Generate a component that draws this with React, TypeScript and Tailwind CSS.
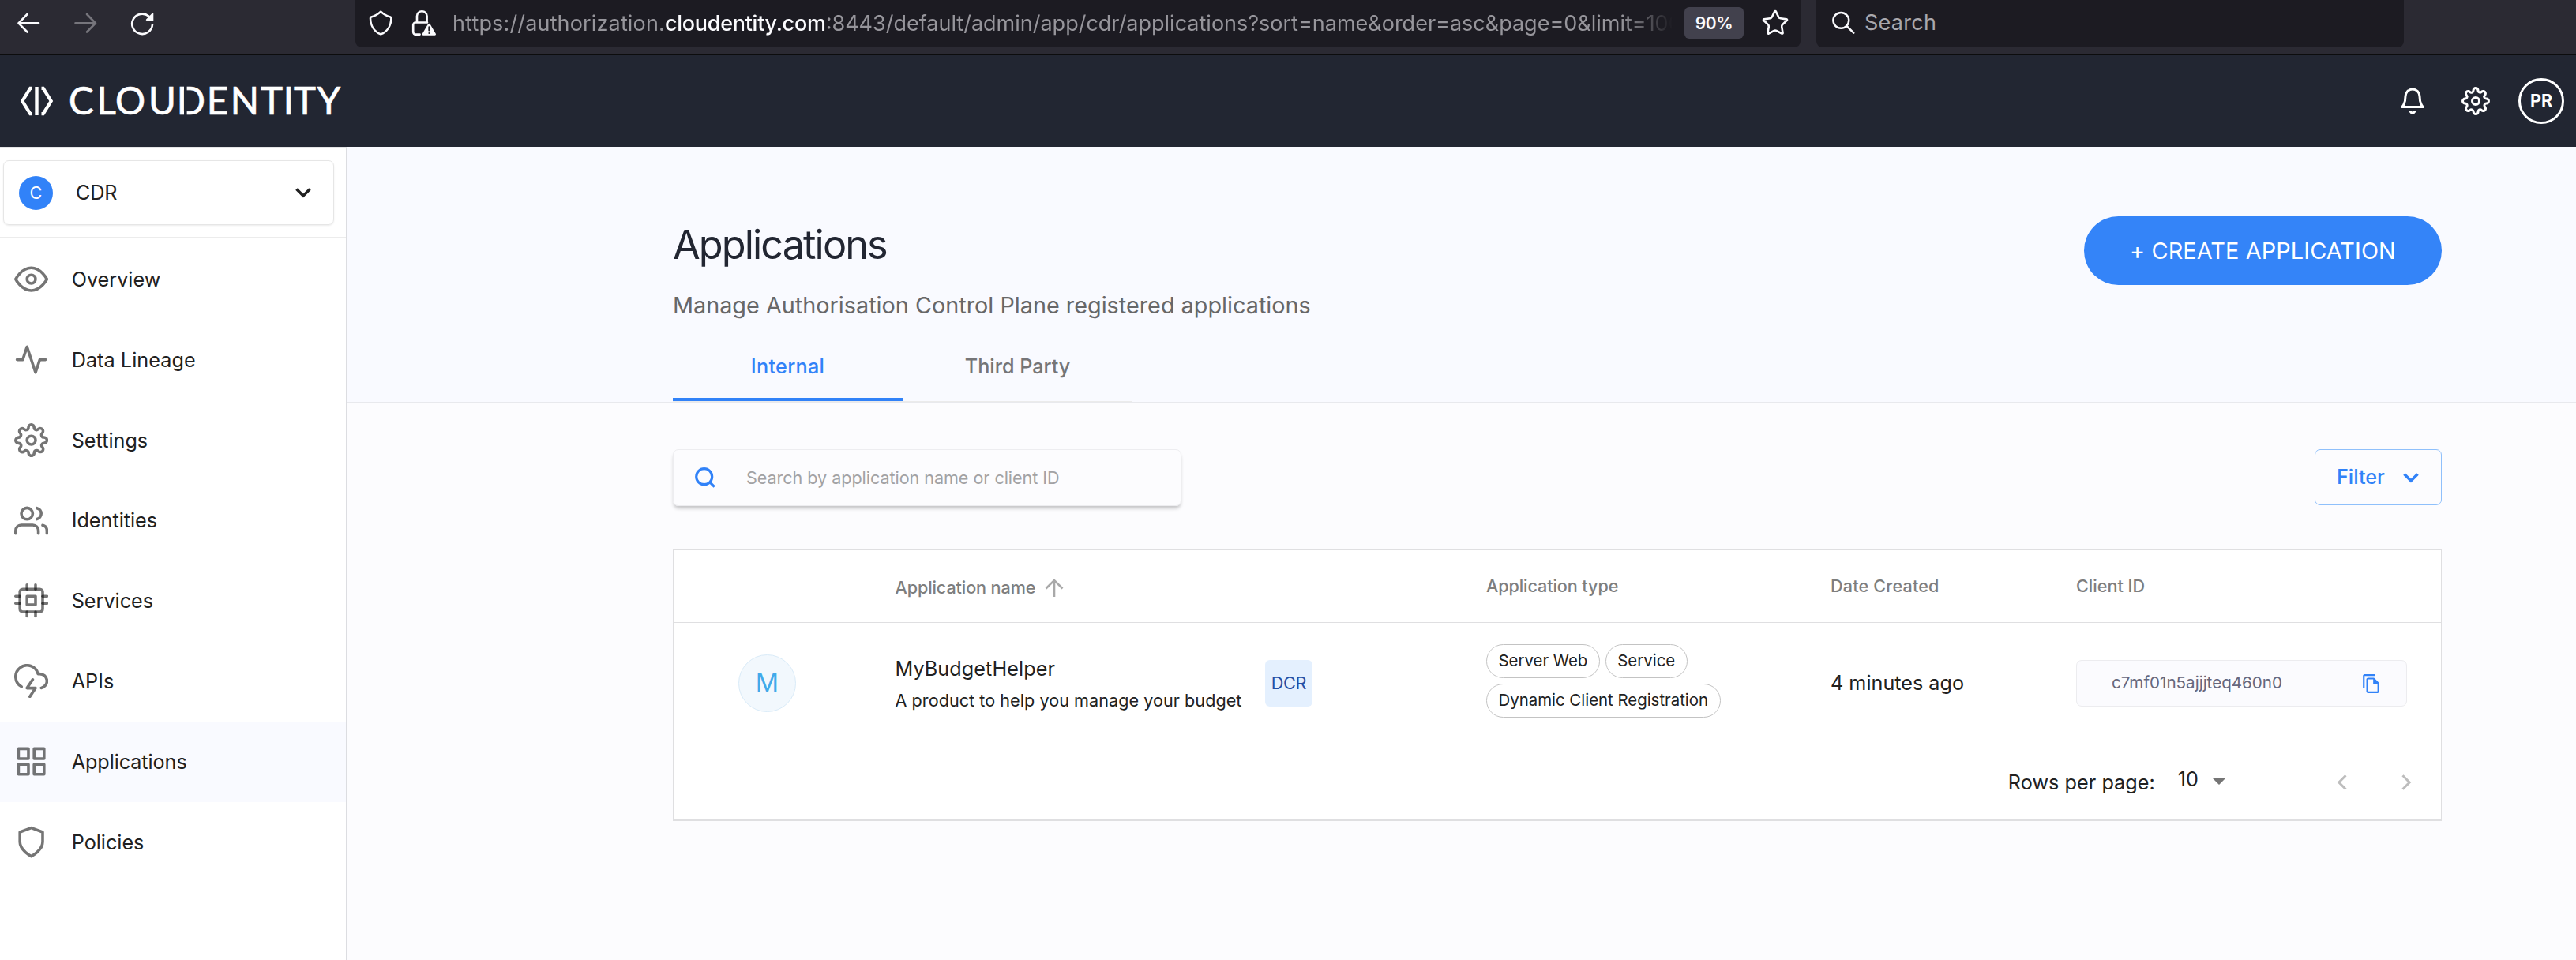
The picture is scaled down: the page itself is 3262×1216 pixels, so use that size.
import type { ReactNode } from 'react';
import {
  FiActivity,
  FiBell,
  FiCloudLightning,
  FiCpu,
  FiEye,
  FiGrid,
  FiSettings,
  FiShield,
  FiUsers,
} from 'react-icons/fi';
import type { IconType } from 'react-icons';
import { Star } from 'lucide-react';
import { MdOutlineFileCopy } from 'react-icons/md';

function BrowserBar() {
  return (
    <div className="flex h-[70px] w-full border-b-2 border-[#0c0c0d] bg-[#2b2a33]">
      <div className="flex h-[58px] w-[450px] items-center">
        <svg width="220" height="58" viewBox="0 0 220 58" fill="none" strokeWidth="2.6" strokeLinecap="round" strokeLinejoin="round">
          <path d="M49 29.3H23.5M34.5 18 23.5 29.3l11 11.2" stroke="#fbfbfe" />
          <path d="M95.5 29.3h25.5M110 18l11 11.3-11 11.2" stroke="#76757c" />
          <path d="M193 31.2a12.9 12.7 0 1 1-4.6-10.6" stroke="#fbfbfe" />
          <path d="M194.3 17.3v8.8h-8.6c-1 0-1.2-.9-.6-1.5l7.6-7.9c.6-.6 1.6-.3 1.6.6z" fill="#fbfbfe" />
        </svg>
      </div>
      <div className="flex h-[60px] w-[1830px] items-center rounded-b-lg bg-[#1c1b22] pb-[3px]">
        <svg className="ml-4 shrink-0" width="90" height="40" viewBox="466 8 90 40" fill="none" stroke="#fbfbfe" strokeWidth="2.6" strokeLinejoin="round" strokeLinecap="round">
          <path d="M482.2 13.6c3.5 3.4 7.6 5.7 12 6.8.8.3 1.2.8 1.2 1.6-.2 9.5-5 17.3-13.2 20.4-8.2-3.1-13-10.900-13.2-20.4 0-.8.4-1.3 1.2-1.6 4.4-1.1 8.5-3.4 12-6.8z" />
          <path d="M528 27.5v-8.2a6.2 6 0 0 1 12.6 0v8.2M541 27.5h-14.8a3 3 0 0 0-3 3V39.6a3 3 0 0 0 3 3h5.4" />
          <path d="M542 29.5c.6-1 2-1 2.6 0l7.2 12.3c.5.9-.1 2-1.2 2h-14.6c-1.1 0-1.7-1.1-1.2-2z" fill="#fbfbfe" stroke="none" />
          <path d="M543.3 33.3v4.2M543.3 40.9v.1" stroke="#1c1b22" strokeWidth="1.9" />
        </svg>
        <div className="ml-[17px] w-[1545px] overflow-hidden whitespace-nowrap pt-0.5 text-[27px] leading-[40px] text-[#96959b] [mask-image:linear-gradient(to_right,black_1480px,transparent_1545px)]">
          <span className="tracking-[0.0056em]">https://authorization.</span>
          <span className="font-medium tracking-[-0.0104em] text-[#fbfbfe]">cloudentity.com</span>
          <span>:8443/default/admin/app/cdr/applications?sort=name&amp;order=asc&amp;page=0&amp;limit=100</span>
        </div>
        <div className="ml-[15px] flex h-10 w-[75px] shrink-0 items-center justify-center rounded-md bg-[#42414d] pt-0.5 text-[21px] font-semibold tracking-[-0.01em] text-[#fbfbfe]">
          90%
        </div>
        <Star className="ml-[22px] shrink-0 text-[#fbfbfe]" size={36} strokeWidth={1.75} />
      </div>
      <div className="ml-5 flex h-[60px] w-[744px] items-center rounded-b-lg bg-[#1c1b22] pb-[3px]">
        <svg className="ml-5 shrink-0" width="30" height="30" viewBox="0 0 30 30" fill="none" stroke="#fbfbfe" strokeWidth="2.5" strokeLinecap="round">
          <circle cx="11.3" cy="11.8" r="9.9" />
          <path d="M18.5 19l8.8 8.6" />
        </svg>
        <span className="ml-[11px] pt-0.5 text-[27px] tracking-[0.01em] text-[#a9a8ad]">Search</span>
      </div>
    </div>
  );
}

function Logo() {
  return (
    <svg className="ml-6 shrink-0 overflow-visible" width="412" height="64" viewBox="24 97 412 64">
      <g fill="none" stroke="#fff" strokeWidth="4.4">
        <path d="M40.5 112.8h-2.2l-10 16.2 10 16.2h2.2" strokeWidth="4.2" />
        <path d="M52.5 112.8h2.2l10 16.2-10 16.2h-2.2" strokeWidth="4.2" />
        <path d="M46.5 111v36" />
      </g>
      <text
        className="font-[Lato,sans-serif]"
        x="87 122.5 146 188 223.8 261.8 291.8 330 358.7 372 401.5"
        y="146.3"
        fontSize="47.5"
        fill="#fff"
        stroke="#fff"
        strokeWidth="0.7"
      >
        CLOUDENTITY
      </text>
      <rect x="233" y="108" width="3.6" height="42" fill="#222632" />
    </svg>
  );
}

function Header() {
  return (
    <header className="flex h-[116px] w-full items-center bg-[#222632] pb-px text-white">
      <Logo />
      <div className="ml-auto flex items-center pr-[15px]">
        <FiBell size={36} />
        <FiSettings className="ml-11" size={36} />
        <div className="ml-9 flex size-[58px] items-center justify-center rounded-full border-[3px] border-white text-[21.6px] font-bold">
          PR
        </div>
      </div>
    </header>
  );
}

function Chevron({ className, width }: { className: string; width: number }) {
  return (
    <svg className={className} width={width} height={width * 0.7} viewBox="0 0 20 14" fill="none" stroke="currentColor" strokeWidth="3.6">
      <path d="M1.5 2.5 10 11l8.5-8.5" />
    </svg>
  );
}

const NAV: { label: string; icon: IconType; active?: boolean; spacing: string }[] = [
  { label: 'Overview', icon: FiEye, spacing: '' },
  { label: 'Data Lineage', icon: FiActivity, spacing: 'tracking-[0.002em]' },
  { label: 'Settings', icon: FiSettings, spacing: '' },
  { label: 'Identities', icon: FiUsers, spacing: '' },
  { label: 'Services', icon: FiCpu, spacing: '' },
  { label: 'APIs', icon: FiCloudLightning, spacing: '' },
  { label: 'Applications', icon: FiGrid, active: true, spacing: 'tracking-[-0.003em]' },
  { label: 'Policies', icon: FiShield, spacing: '' },
];

function Sidebar() {
  return (
    <aside className="w-[439px] shrink-0 border-r border-t border-r-[#dcdde1] border-t-[#e4e4e6] bg-white">
      <div className="h-[115px] border-b-2 border-[#ececec] pl-1 pt-4">
        <div className="flex h-[82px] w-[419px] items-center rounded-[7px] border border-[#e6e6e6] shadow-[0_1px_2px_rgba(0,0,0,0.08)]">
          <div className="ml-[19px] flex size-[43px] items-center justify-center rounded-full bg-[#3182f8] text-[21.6px] text-white">
            C
          </div>
          <span className="ml-[29px] pt-px text-[25.2px] tracking-[-0.008em]">CDR</span>
          <Chevron className="ml-auto mr-7" width={20} />
        </div>
      </div>
      <nav className="pt-px">
        {NAV.map(({ label, icon: Icon, active, spacing }) => (
          <div
            key={label}
            className={`flex h-[101.8px] items-center gap-[29.5px] pl-[18px] text-[25.2px] ${active ? 'bg-[#f9faff]' : ''}`}
          >
            <Icon size={43.2} color="rgba(0,0,0,0.54)" />
            <span className={`pt-[2px] ${spacing}`}>{label}</span>
          </div>
        ))}
      </nav>
    </aside>
  );
}

function PageHeader() {
  return (
    <section className="h-[324px] border-b border-[#e8e9ed] bg-[#f9faff] pl-[413px] pr-[170px] pt-[88px]">
      <div className="flex justify-between">
        <div>
          <h1 className="h-[72px] text-[50.4px] leading-[72px] tracking-[-0.038em] text-[#222632]">Applications</h1>
          <p className="pt-[20px] text-[28.8px] leading-[42px] text-[#676768]">
            Manage Authorisation Control Plane registered applications
          </p>
        </div>
        <button className="flex h-[87px] w-[453px] items-center justify-center rounded-full bg-[#3484f8] text-[28.8px] tracking-[0.005em] text-white">
          + CREATE APPLICATION
        </button>
      </div>
      <div className="flex h-[101px] w-[582px] border-b border-[#ebebeb] text-[25.2px] font-medium">
        <div className="w-[291px] border-b-4 border-[#3182f8] pt-[36px] text-center leading-[40px] tracking-[0.012em] text-[#3182f8]">
          Internal
        </div>
        <div className="w-[291px] pt-[36px] text-center leading-[40px] text-[#757577]">Third Party</div>
      </div>
    </section>
  );
}

function Toolbar() {
  return (
    <div className="flex items-start justify-between">
      <div className="flex h-[72px] w-[644px] items-center rounded-[7px] border border-[#ededf0] shadow-[0_4px_4px_-1px_rgba(0,0,0,0.22)]">
        <svg className="ml-[27px] shrink-0 text-[#3182f8]" width="26" height="26" viewBox="0 0 26 26" fill="none" stroke="currentColor" strokeWidth="3.2">
          <circle cx="11.7" cy="11.7" r="10" />
          <path d="M18.7 18.7l6 6" />
        </svg>
        <span className="ml-[39px] text-[21.6px] tracking-[-0.0027em] text-[#a2a2a4]">
          Search by application name or client ID
        </span>
      </div>
      <button className="flex h-[71px] w-[161px] items-center rounded-[7px] border border-[#8fc0fb] pl-[27px] pt-px text-[25.2px] font-medium text-[#3182f8]">
        Filter
        <Chevron className="ml-[23px]" width={20} />
      </button>
    </div>
  );
}

function Chip({ children }: { children: ReactNode }) {
  return (
    <span className="flex h-[43px] items-center rounded-full border border-[#c3c3c3] px-[14.5px] text-[20.4px]">
      {children}
    </span>
  );
}

const COLS = 'grid grid-cols-[280.5px_748.5px_436px_311px_1fr] items-center';

function ApplicationsTable() {
  return (
    <div className="mt-[55px] border border-b-2 border-[#dfdfe1] bg-white">
      <div className={`${COLS} h-[92px] border-b border-[#dfdfe1] text-[21.6px] font-medium text-[#7e7e7e]`}>
        <span />
        <span className="flex items-center pt-1">
          <span className="tracking-[-0.005em]">Application name</span>
          <svg className="ml-3" width="24" height="24" viewBox="0 0 24 24" fill="none" stroke="#a9a9a9" strokeWidth="2.6">
            <path d="M12 24V3M1.5 13.5 12 3l10.5 10.5" />
          </svg>
        </span>
        <span className="tracking-[-0.004em]">Application type</span>
        <span className="tracking-[0.008em]">Date Created</span>
        <span>Client ID</span>
      </div>
      <div className={`${COLS} h-[154px] border-b border-[#dfdfe1] text-[25.2px]`}>
        <div className="ml-[82px] flex size-[73px] items-center justify-center rounded-full border border-[#d9ebf8] bg-[#f2f8fd] text-[32.4px] text-[#42aaea]">
          M
        </div>
        <div className="flex items-center">
          <div className="w-[468.5px] pt-px">
            <div className="leading-[42px] tracking-[0.003em]">MyBudgetHelper</div>
            <div className="whitespace-nowrap text-[21.6px] leading-[38px] tracking-[0.002em]">
              A product to help you manage your budget
            </div>
          </div>
          <div className="flex h-[59px] w-[60px] items-center justify-center rounded-md bg-[#e4f0fe] text-[21.6px] tracking-[-0.01em] text-[#234fa6]">
            DCR
          </div>
        </div>
        <div className="flex flex-wrap gap-x-[7px] gap-y-[7px] pb-[6px] pr-[100px]">
          <Chip>Server Web</Chip>
          <Chip>Service</Chip>
          <Chip>Dynamic Client Registration</Chip>
        </div>
        <span className="pt-px">4 minutes ago</span>
        <div className="flex h-[59px] w-[419px] items-center rounded-[7px] border border-[#ececef] bg-[#fbfbfe] pl-[44px] text-[20.6px] text-[#66677c]">
          c7mf01n5ajjjteq460n0
          <MdOutlineFileCopy className="ml-auto mr-[31px] text-[#3182f8]" size={26} />
        </div>
      </div>
      <div className="flex h-[95px] items-center justify-end text-[25.2px]">
        <span className="pt-0.5 tracking-[0.002em]">Rows per page:</span>
        <span className="ml-[29px] pb-[5px]">10</span>
        <svg className="mb-[3px] ml-[17px]" width="18" height="9" viewBox="0 0 18 9" fill="#757575">
          <path d="M0 0h18L9 9z" />
        </svg>
        <svg className="ml-[140px] mr-[37px] mt-px" width="95" height="20" viewBox="0 0 95 20" fill="none" stroke="#bdbdbd" strokeWidth="3">
          <path d="M11.500 1.200 2.800 10l8.700 8.800M83.500 1.200 92.200 10l-8.700 8.800" />
        </svg>
      </div>
    </div>
  );
}

export default function App() {
  return (
    <div className="flex h-[1216px] w-[3262px] flex-col overflow-hidden bg-[#fcfcfe] font-[Inter,sans-serif] text-[#212121]">
      <BrowserBar />
      <Header />
      <div className="flex flex-1">
        <Sidebar />
        <main className="flex-1">
          <PageHeader />
          <div className="pl-[413px] pr-[170px] pt-[59px]">
            <Toolbar />
            <ApplicationsTable />
          </div>
        </main>
      </div>
    </div>
  );
}
